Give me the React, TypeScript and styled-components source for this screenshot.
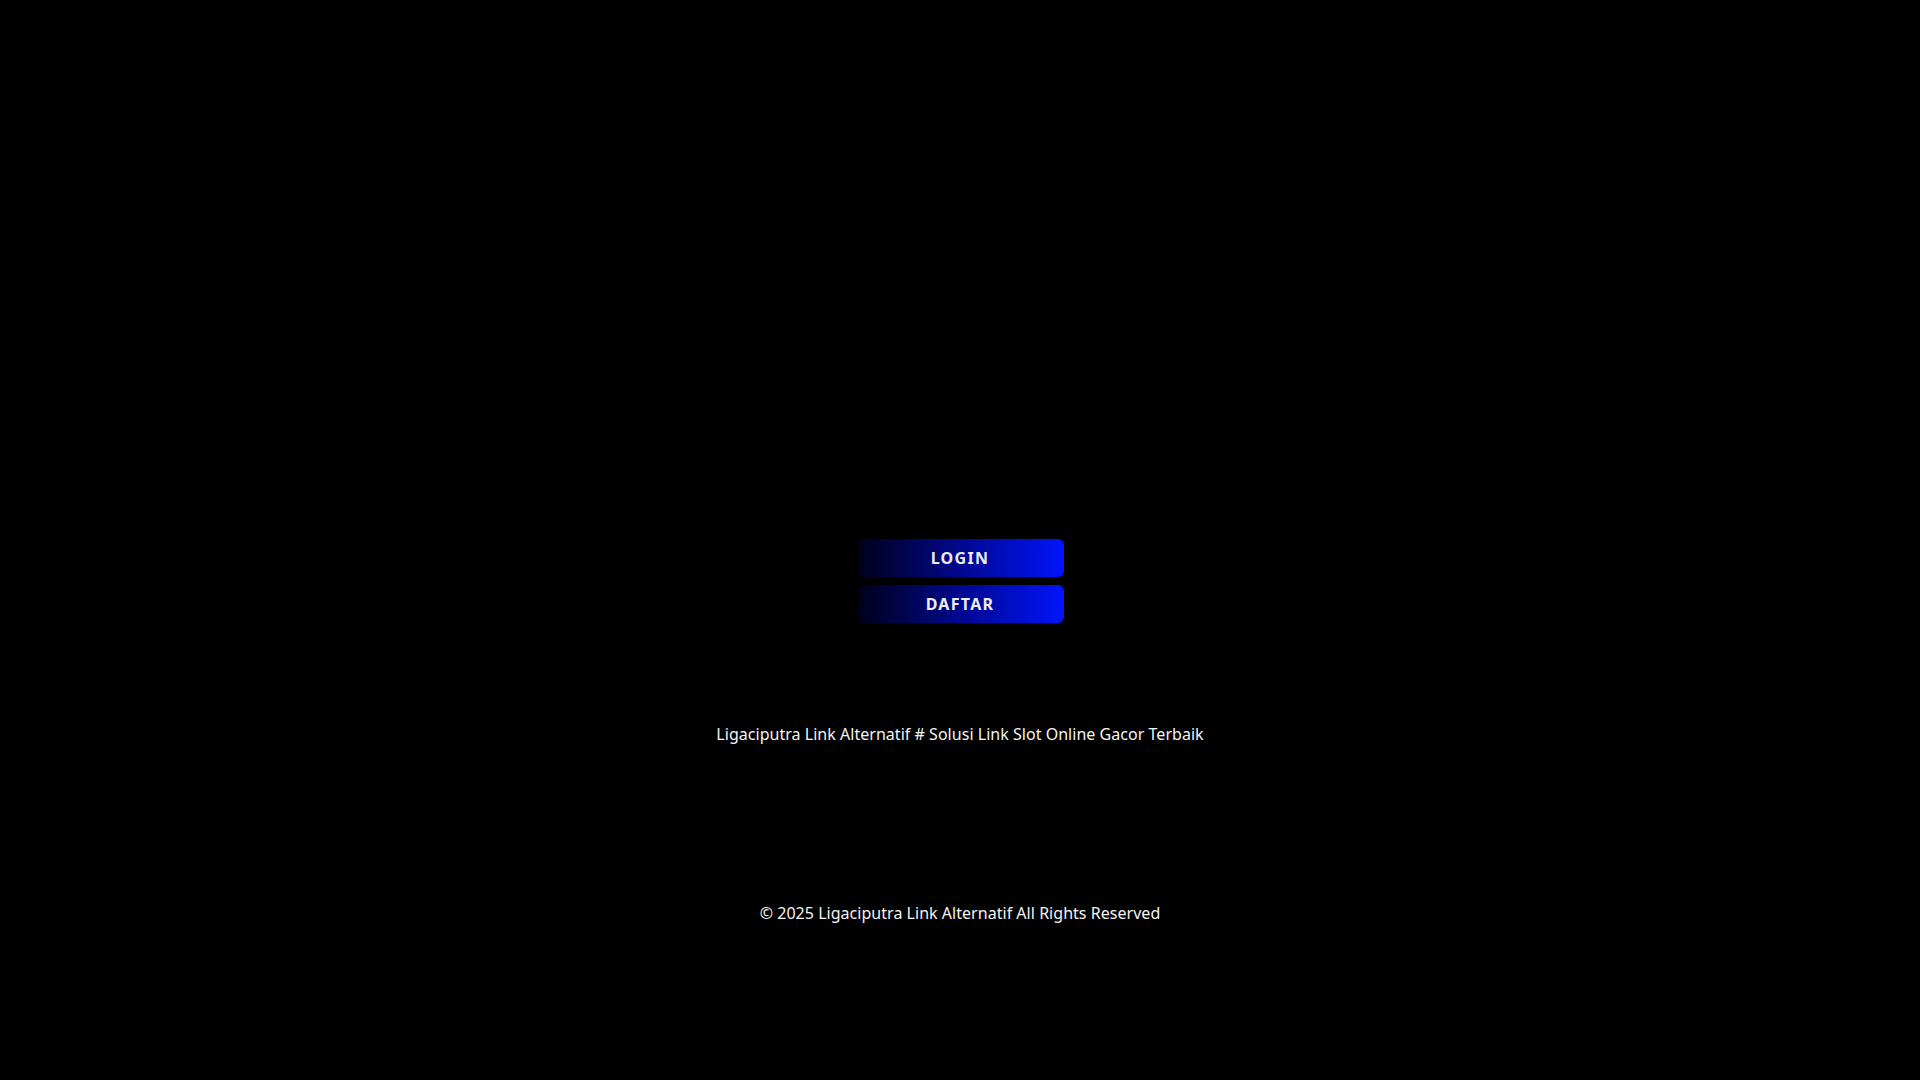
import React from 'react';
import styled, { createGlobalStyle } from 'styled-components';

const GlobalStyle = createGlobalStyle`
    html, body {
        margin: 0;
        padding: 0;
        background: #000;
        color: #fff;
        font-family: "Noto Sans", "Open Sans", sans-serif;
    }
`;

// Full page wrapper, content centred in a column
const PageWrap = styled.div`
    min-height: 1080px;
    display: flex;
    flex-direction: column;
    align-items: center;
    padding-top: 539px;
    box-sizing: border-box;
`;

// Stack of the two action buttons
const ButtonStack = styled.div`
    display: flex;
    flex-direction: column;
    gap: 8px;
    width: 207px;
`;

const ActionButton = styled.a`
    display: flex;
    align-items: center;
    justify-content: center;
    height: 38px;
    border-radius: 6px;
    background: linear-gradient(90deg, #000019 0%, #00088f 50%, #0015fb 100%);
    color: #ececf4;
    font-weight: 700;
    font-size: 16px;
    letter-spacing: 1.3px;
    text-decoration: none;
`;

const Tagline = styled.p`
    margin: 100px 0 0;
    font-size: 16px;
    line-height: 22px;
    letter-spacing: 0.03px;
    color: #f4f4f4;
`;

const Copyright = styled.footer`
    margin-top: 157px;
    font-size: 16px;
    line-height: 22px;
    letter-spacing: 0.03px;
    color: #f4f4f4;
`;

export default function App() {
    return (
        <>
            <GlobalStyle/>
            <PageWrap>
                <ButtonStack>
                    <ActionButton href="#">LOGIN</ActionButton>
                    <ActionButton href="#">DAFTAR</ActionButton>
                </ButtonStack>
                <Tagline>Ligaciputra Link Alternatif # Solusi Link Slot Online Gacor Terbaik</Tagline>
                <Copyright>© 2025 Ligaciputra Link Alternatif All Rights Reserved</Copyright>
            </PageWrap>
        </>
    );
}
